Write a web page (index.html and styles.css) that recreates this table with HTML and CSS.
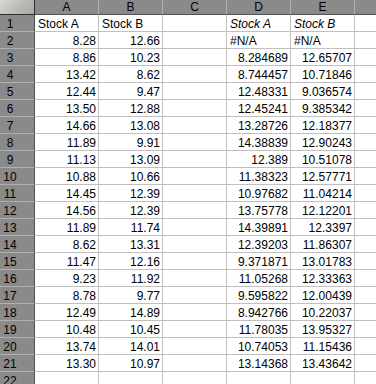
FILE: index.html
```html
<!DOCTYPE html>
<html>
<head>
<meta charset="utf-8">
<link rel="stylesheet" href="styles.css">
</head>
<body>
<div class="sheet">
  <div class="corner"></div>
  <div class="ch">A</div><div class="ch">B</div><div class="ch">C</div><div class="ch">D</div><div class="ch">E</div><div class="ch last"></div>

  <div class="rh">1</div><div class="c">Stock A</div><div class="c">Stock B</div><div class="c"></div><div class="c it">Stock A</div><div class="c it">Stock B</div><div class="c last"></div>
  <div class="rh">2</div><div class="c n">8.28</div><div class="c n">12.66</div><div class="c"></div><div class="c">#N/A</div><div class="c">#N/A</div><div class="c last"></div>
  <div class="rh">3</div><div class="c n">8.86</div><div class="c n">10.23</div><div class="c"></div><div class="c n">8.284689</div><div class="c n">12.65707</div><div class="c last"></div>
  <div class="rh">4</div><div class="c n">13.42</div><div class="c n">8.62</div><div class="c"></div><div class="c n">8.744457</div><div class="c n">10.71846</div><div class="c last"></div>
  <div class="rh">5</div><div class="c n">12.44</div><div class="c n">9.47</div><div class="c"></div><div class="c n">12.48331</div><div class="c n">9.036574</div><div class="c last"></div>
  <div class="rh">6</div><div class="c n">13.50</div><div class="c n">12.88</div><div class="c"></div><div class="c n">12.45241</div><div class="c n">9.385342</div><div class="c last"></div>
  <div class="rh">7</div><div class="c n">14.66</div><div class="c n">13.08</div><div class="c"></div><div class="c n">13.28726</div><div class="c n">12.18377</div><div class="c last"></div>
  <div class="rh">8</div><div class="c n">11.89</div><div class="c n">9.91</div><div class="c"></div><div class="c n">14.38839</div><div class="c n">12.90243</div><div class="c last"></div>
  <div class="rh">9</div><div class="c n">11.13</div><div class="c n">13.09</div><div class="c"></div><div class="c n">12.389</div><div class="c n">10.51078</div><div class="c last"></div>
  <div class="rh">10</div><div class="c n">10.88</div><div class="c n">10.66</div><div class="c"></div><div class="c n">11.38323</div><div class="c n">12.57771</div><div class="c last"></div>
  <div class="rh">11</div><div class="c n">14.45</div><div class="c n">12.39</div><div class="c"></div><div class="c n">10.97682</div><div class="c n">11.04214</div><div class="c last"></div>
  <div class="rh">12</div><div class="c n">14.56</div><div class="c n">12.39</div><div class="c"></div><div class="c n">13.75778</div><div class="c n">12.12201</div><div class="c last"></div>
  <div class="rh">13</div><div class="c n">11.89</div><div class="c n">11.74</div><div class="c"></div><div class="c n">14.39891</div><div class="c n">12.3397</div><div class="c last"></div>
  <div class="rh">14</div><div class="c n">8.62</div><div class="c n">13.31</div><div class="c"></div><div class="c n">12.39203</div><div class="c n">11.86307</div><div class="c last"></div>
  <div class="rh">15</div><div class="c n">11.47</div><div class="c n">12.16</div><div class="c"></div><div class="c n">9.371871</div><div class="c n">13.01783</div><div class="c last"></div>
  <div class="rh">16</div><div class="c n">9.23</div><div class="c n">11.92</div><div class="c"></div><div class="c n">11.05268</div><div class="c n">12.33363</div><div class="c last"></div>
  <div class="rh">17</div><div class="c n">8.78</div><div class="c n">9.77</div><div class="c"></div><div class="c n">9.595822</div><div class="c n">12.00439</div><div class="c last"></div>
  <div class="rh">18</div><div class="c n">12.49</div><div class="c n">14.89</div><div class="c"></div><div class="c n">8.942766</div><div class="c n">10.22037</div><div class="c last"></div>
  <div class="rh">19</div><div class="c n">10.48</div><div class="c n">10.45</div><div class="c"></div><div class="c n">11.78035</div><div class="c n">13.95327</div><div class="c last"></div>
  <div class="rh">20</div><div class="c n">13.74</div><div class="c n">14.01</div><div class="c"></div><div class="c n">10.74053</div><div class="c n">11.15436</div><div class="c last"></div>
  <div class="rh">21</div><div class="c n">13.30</div><div class="c n">10.97</div><div class="c"></div><div class="c n">13.14368</div><div class="c n">13.43642</div><div class="c last"></div>
  <div class="rh">22</div><div class="c"></div><div class="c"></div><div class="c"></div><div class="c"></div><div class="c"></div><div class="c last"></div>
</div>
</body>
</html>
```
FILE: styles.css
```css
html, body {
  margin: 0;
  padding: 0;
  background: #ffffff;
  overflow: hidden;
}
.sheet {
  display: grid;
  grid-template-columns: 35px repeat(5, 64px) 1fr;
  grid-template-rows: 15px repeat(22, 17px);
  width: 376px;
  height: 384px;
  font-family: "Liberation Sans", Arial, sans-serif;
  font-size: 12px;
  color: #000;
}
.sheet > div {
  box-sizing: border-box;
  white-space: nowrap;
  overflow: hidden;
}
.corner {
  background: linear-gradient(135deg, #d8d8d4 0%, #b8b8b4 60%, #a8a8a4 100%);
  border-right: 1px solid #303030;
  border-bottom: 1px solid #303030;
}
.ch {
  background: #8a8a8a;
  border-right: 1px solid #b0b0b0;
  border-bottom: 1px solid #505050;
  text-align: center;
  line-height: 14px;
}
.rh {
  background: #8a8a8a;
  border-bottom: 1px solid #b0b0b0;
  border-right: 1px solid #505050;
  padding-right: 14px;
  text-align: center;
  line-height: 18px;
}
.c {
  border-right: 1px solid #c0c0c0;
  border-bottom: 1px solid #c0c0c0;
  padding: 0 3px;
  line-height: 18px;
}
.c.n {
  text-align: right;
  padding-right: 2px;
}
.c.it {
  font-style: italic;
}
.last {
  border-right: none;
}
```
